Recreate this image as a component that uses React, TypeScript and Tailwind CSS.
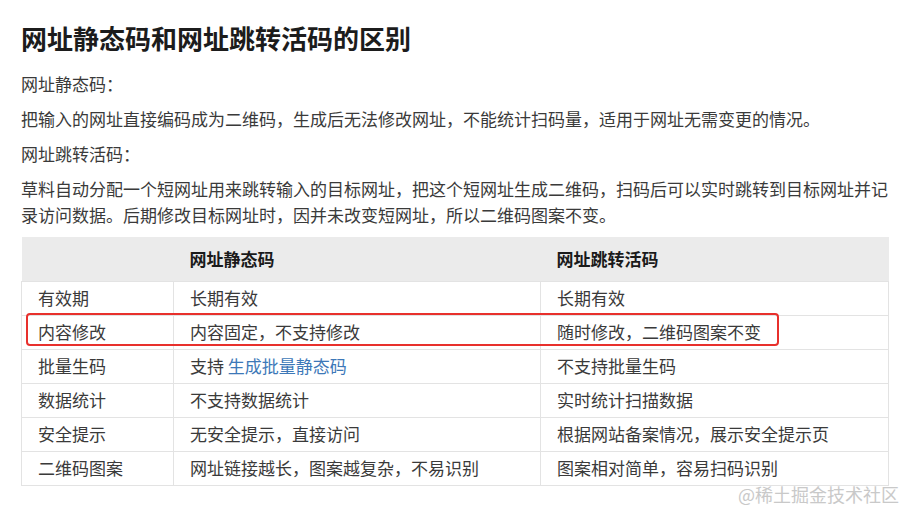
import * as React from "react";

type Row = {
  label: string;
  staticCode: React.ReactNode;
  liveCode: string;
};

const ROWS: Row[] = [
  { label: "有效期", staticCode: "长期有效", liveCode: "长期有效" },
  { label: "内容修改", staticCode: "内容固定，不支持修改", liveCode: "随时修改，二维码图案不变" },
  {
    label: "批量生码",
    staticCode: (
      <>
        支持 <span className="text-[#3d78b8]">生成批量静态码</span>
      </>
    ),
    liveCode: "不支持批量生码",
  },
  { label: "数据统计", staticCode: "不支持数据统计", liveCode: "实时统计扫描数据" },
  { label: "安全提示", staticCode: "无安全提示，直接访问", liveCode: "根据网站备案情况，展示安全提示页" },
  { label: "二维码图案", staticCode: "网址链接越长，图案越复杂，不易识别", liveCode: "图案相对简单，容易扫码识别" },
];

const FONT = "font-['Microsoft_YaHei','Noto_Sans_CJK_SC',sans-serif]";

export default function App() {
  return (
    <div className={`relative h-[510px] w-[904px] overflow-hidden bg-white ${FONT}`}>
      <div className="w-[867px] pl-[21px] pt-[20px]" style={{ boxSizing: "content-box" }}>
        <h1 className="whitespace-nowrap text-[26px] font-bold leading-[36px] text-[#1c1c1c]">
          网址静态码和网址跳转活码的区别
        </h1>

        <div className="mt-[15px] flex flex-col gap-[9px] text-[17px] leading-[26px] text-[#3a3a3a]">
          <p>网址静态码：</p>
          <p className="whitespace-nowrap">
            把输入的网址直接编码成为二维码，生成后无法修改网址，不能统计扫码量，适用于网址无需变更的情况。
          </p>
          <p>网址跳转活码：</p>
          <p className="whitespace-nowrap">
            草料自动分配一个短网址用来跳转输入的目标网址，把这个短网址生成二维码，扫码后可以实时跳转到目标网址并记
            <br />
            录访问数据。后期修改目标网址时，因并未改变短网址，所以二维码图案不变。
          </p>
        </div>

        {/* comparison table */}
        <table className="mt-[9px] w-[867px] table-fixed border-collapse text-[17px] text-[#3a3a3a]">
          <colgroup>
            <col className="w-[152px]" />
            <col className="w-[367px]" />
            <col className="w-[348px]" />
          </colgroup>
          <thead>
            <tr className="h-[44px] bg-[#ebebeb] text-left text-[#1a1a1a]">
              <th className="px-4 font-bold"></th>
              <th className="px-4 font-bold">网址静态码</th>
              <th className="px-4 font-bold">网址跳转活码</th>
            </tr>
          </thead>
          <tbody>
            {ROWS.map((row) => (
              <tr key={row.label} className="h-[34px]">
                <td className="border border-[#e3e3e3] px-4 py-0 leading-[24px]">{row.label}</td>
                <td className="border border-[#e3e3e3] px-4 py-0 leading-[24px]">{row.staticCode}</td>
                <td className="border border-[#e3e3e3] px-4 py-0 leading-[24px]">{row.liveCode}</td>
              </tr>
            ))}
          </tbody>
        </table>
      </div>

      {/* red highlight drawn over the "内容修改" row */}
      <div className="pointer-events-none absolute left-[26px] top-[313px] h-[33px] w-[753px] rounded-[4px] border-2 border-[#e8302c]" />

      {/* watermark */}
      <span className="absolute left-[738px] top-[482px] whitespace-nowrap text-[18px] leading-[24px] text-[#c9c9c9]">
        @稀土掘金技术社区
      </span>
    </div>
  );
}
